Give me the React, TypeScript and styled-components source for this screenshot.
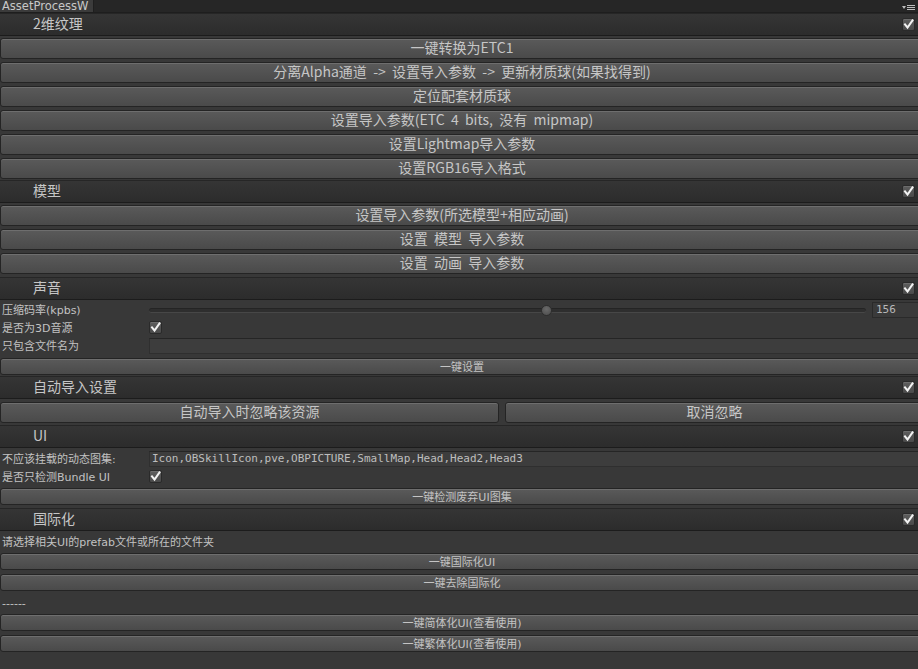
import React from 'react';
import styled, { createGlobalStyle } from 'styled-components';

const GlobalStyle = createGlobalStyle`
  html, body { margin: 0; padding: 0; background: #383838; overflow: hidden; }
  * { box-sizing: border-box; }
`;

const UI_FONT = `"DejaVu Sans", "Noto Sans CJK SC", sans-serif`;
const MONO_FONT = `"DejaVu Sans Mono", "Noto Sans CJK SC", monospace`;
const BIG_FONT = `"Noto Sans CJK SC", "Noto Sans", sans-serif`;

const Window = styled.div`
  width: 918px;
  height: 669px;
  overflow: hidden;
  background: #383838;
`;

const Content = styled.div`
  width: 924px;
  display: flex;
  flex-direction: column;
`;

const TabBar = styled.div`
  height: 13px;
  width: 918px;
  background: #262626;
  display: flex;
  justify-content: space-between;
  align-items: stretch;
  border-bottom: 1px solid #1e1e1e;
`;

const Tab = styled.div`
  width: 94px;
  background: #3b3b3b;
  color: #c8c8c8;
  font: 11.5px/12px ${UI_FONT};
  padding-left: 2px;
  overflow: hidden;
  white-space: nowrap;
  border-right: 1px solid #1f1f1f;
`;

const TabMenu = styled.div`
  width: 16px;
  display: flex;
  align-items: flex-end;
  justify-content: flex-end;
  padding-right: 2px;
  padding-bottom: 1px;
`;

const Header = styled.div<{ $mt?: number }>`
  margin-top: ${(p) => p.$mt ?? 0}px;
  height: 23px;
  display: flex;
  align-items: center;
  justify-content: space-between;
  padding: 0 9px 0 33px;
  background: linear-gradient(#353535, #2c2c2c);
  border-top: 1px solid #262626;
  border-bottom: 1px solid #1c1c1c;
  color: #c6c6c6;
  font: 14px/1 ${BIG_FONT};
`;

const HeaderTitle = styled.span`
  padding-bottom: 3px;
`;

const CheckBox = styled.span`
  width: 13px;
  height: 13px;
  border-radius: 2px;
  background: linear-gradient(#5e5e5e, #4a4a4a);
  border: 1px solid #2a2a2a;
  box-shadow: inset 0 1px 0 #6c6c6c;
  display: inline-flex;
  align-items: center;
  justify-content: center;
  flex-shrink: 0;
`;

const Button = styled.button<{ $mt?: number; $small?: boolean }>`
  margin: ${(p) => p.$mt ?? 0}px 0 0 0;
  height: ${(p) => (p.$small ? 17 : 21)}px;
  width: 100%;
  padding: ${(p) => (p.$small ? '1px 0 0 0' : '0 0 3px 0')};
  border: 1px solid #242424;
  border-radius: 3px;
  background: linear-gradient(#5a5a5a, #4a4a4a);
  box-shadow: inset 0 1px 0 #6e6e6e;
  color: ${(p) => (p.$small ? '#c4c4c4' : '#c6c6c6')};
  font: ${(p) => (p.$small ? `11px/1 ${UI_FONT}` : `14px/1 ${BIG_FONT}`)};
  white-space: pre;
  text-align: center;
  display: block;
`;

const ButtonPair = styled.div<{ $mt?: number }>`
  margin-top: ${(p) => p.$mt ?? 0}px;
  display: flex;
  gap: 6px;
  & > button:first-child {
    flex: 0 0 499px;
  }
  & > button:last-child {
    flex: 1;
  }
`;

const FieldGroup = styled.div<{ $mt?: number }>`
  margin-top: ${(p) => p.$mt ?? 0}px;
  display: flex;
  flex-direction: column;
  gap: 1px;
`;

const FieldRow = styled.div`
  height: 17px;
  display: grid;
  grid-template-columns: 149px 1fr;
  align-items: center;
`;

const Label = styled.div<{ $mt?: number }>`
  margin-top: ${(p) => p.$mt ?? 0}px;
  padding: 3px 0 0 2px;
  color: #c2c2c2;
  font: 11px/14px ${UI_FONT};
  white-space: nowrap;
  height: 17px;
`;

const TextField = styled.div`
  height: 16px;
  background: #3d3d3d;
  border: 1px solid #2f2f2f;
  border-top-color: #252525;
  color: #bdbdbd;
  font: 11px/14px ${MONO_FONT};
  padding-left: 2px;
  white-space: nowrap;
  overflow: hidden;
`;

const SliderRow = styled.div`
  display: flex;
  align-items: center;
  height: 17px;
`;

const TrackWrap = styled.div`
  position: relative;
  flex: 1;
  height: 17px;
  display: flex;
  align-items: center;
`;

const Track = styled.div`
  width: 100%;
  height: 5px;
  margin-top: 2px;
  border-radius: 3px;
  background: #2e2e2e;
  border-top: 1px solid #242424;
  border-bottom: 1px solid #474747;
`;

const Thumb = styled.div`
  position: absolute;
  top: 4px;
  width: 11px;
  height: 11px;
  margin-left: -5px;
  border-radius: 50%;
  background: radial-gradient(circle at 50% 35%, #6a6a6a, #4c4c4c);
  border: 1px solid #2e2e2e;
`;

const NumberField = styled.div`
  width: 52px;
  margin-left: 6px;
  height: 16px;
  background: #3a3a3a;
  border: 1px solid #2a2a2a;
  color: #b8b8b8;
  font: 11px/14px ${MONO_FONT};
  padding-left: 3px;
`;

const Check = () => (
  <svg width="11" height="11" viewBox="0 0 11 11">
    <path d="M2 5.5 L4.5 8.5 L9.5 1.5" fill="none" stroke="#f2f2f2" strokeWidth="2" strokeLinecap="square" />
  </svg>
);

const Box = () => (
  <CheckBox>
    <Check />
  </CheckBox>
);

const MenuIcon = () => (
  <svg width="14" height="7" viewBox="0 0 14 7">
    <path d="M0 2 L4 2 L2 5 Z" fill="#bdbdbd" />
    <rect x="5" y="1" width="8" height="1" fill="#bdbdbd" />
    <rect x="5" y="3" width="8" height="1" fill="#bdbdbd" />
    <rect x="5" y="5" width="8" height="1" fill="#bdbdbd" />
  </svg>
);

const SectionHeader = ({ title, mt }: { title: string; mt?: number }) => (
  <Header $mt={mt}>
    <HeaderTitle>{title}</HeaderTitle>
    <Box />
  </Header>
);

const texButtons = [
  '一键转换为ETC1',
  '分离Alpha通道  ->  设置导入参数  ->  更新材质球(如果找得到)',
  '定位配套材质球',
  '设置导入参数(ETC  4  bits,  没有  mipmap)',
  '设置Lightmap导入参数',
  '设置RGB16导入格式',
];

const modelButtons = ['设置导入参数(所选模型+相应动画)', '设置  模型  导入参数', '设置  动画  导入参数'];

const bitrate = { min: 32, max: 256, value: 156 };

export default function App() {
  const pct = ((bitrate.value - bitrate.min) / (bitrate.max - bitrate.min)) * 100;
  return (
    <Window>
      <GlobalStyle />
      <TabBar>
        <Tab>AssetProcessW</Tab>
        <TabMenu>
          <MenuIcon />
        </TabMenu>
      </TabBar>
      <Content>
        <SectionHeader title="2维纹理" />
        {texButtons.map((t, i) => (
          <Button key={t} $mt={i === 0 ? 2 : 3}>
            {t}
          </Button>
        ))}
        <SectionHeader title="模型" mt={1} />
        {modelButtons.map((t, i) => (
          <Button key={t} $mt={i === 0 ? 2 : 3}>
            {t}
          </Button>
        ))}
        <SectionHeader title="声音" mt={3} />
        <FieldGroup $mt={1}>
          <FieldRow>
            <Label>压缩码率(kpbs)</Label>
            <SliderRow>
              <TrackWrap>
                <Track />
                <Thumb style={{ left: `${pct}%` }} />
              </TrackWrap>
              <NumberField>{bitrate.value}</NumberField>
            </SliderRow>
          </FieldRow>
          <FieldRow>
            <Label>是否为3D音源</Label>
            <Box />
          </FieldRow>
          <FieldRow>
            <Label>只包含文件名为</Label>
            <TextField />
          </FieldRow>
        </FieldGroup>
        <Button $small $mt={4}>一键设置</Button>
        <SectionHeader title="自动导入设置" mt={1} />
        <ButtonPair $mt={3}>
          <Button>自动导入时忽略该资源</Button>
          <Button>取消忽略</Button>
        </ButtonPair>
        <SectionHeader title="UI" mt={2} />
        <FieldGroup $mt={2}>
          <FieldRow>
            <Label>不应该挂载的动态图集:</Label>
            <TextField>Icon,OBSkillIcon,pve,OBPICTURE,SmallMap,Head,Head2,Head3</TextField>
          </FieldRow>
          <FieldRow>
            <Label>是否只检测Bundle UI</Label>
            <Box />
          </FieldRow>
        </FieldGroup>
        <Button $small $mt={3}>一键检测废弃UI图集</Button>
        <SectionHeader title="国际化" mt={3} />
        <Label $mt={2}>请选择相关UI的prefab文件或所在的文件夹</Label>
        <Button $small $mt={3}>一键国际化UI</Button>
        <Button $small $mt={4}>一键去除国际化</Button>
        <Label $mt={3}>------</Label>
        <Button $small $mt={3}>一键简体化UI(查看使用)</Button>
        <Button $small $mt={4}>一键繁体化UI(查看使用)</Button>
      </Content>
    </Window>
  );
}
